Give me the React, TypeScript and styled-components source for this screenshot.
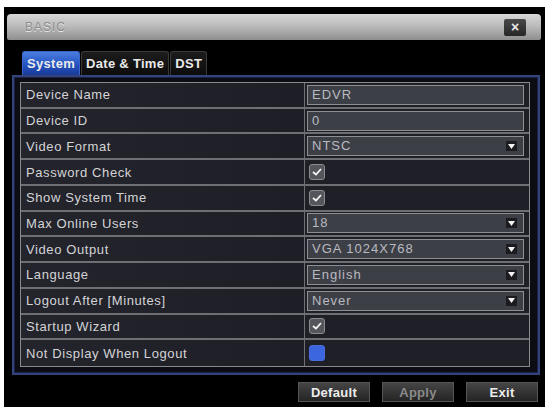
import React from 'react';
import styled, { createGlobalStyle } from 'styled-components';

const GlobalStyle = createGlobalStyle`
  body {
    margin: 0;
    background: #fff;
    font-family: "Liberation Sans", Arial, sans-serif;
  }
`;

type Field =
  | { label: string; kind: 'text'; value: string }
  | { label: string; kind: 'select'; value: string }
  | { label: string; kind: 'check'; checked: boolean };

const fields: Field[] = [
  { label: 'Device Name', kind: 'text', value: 'EDVR' },
  { label: 'Device ID', kind: 'text', value: '0' },
  { label: 'Video Format', kind: 'select', value: 'NTSC' },
  { label: 'Password Check', kind: 'check', checked: true },
  { label: 'Show System Time', kind: 'check', checked: true },
  { label: 'Max Online Users', kind: 'select', value: '18' },
  { label: 'Video Output', kind: 'select', value: 'VGA 1024X768' },
  { label: 'Language', kind: 'select', value: 'English' },
  { label: 'Logout After [Minutes]', kind: 'select', value: 'Never' },
  { label: 'Startup Wizard', kind: 'check', checked: true },
  { label: 'Not Display When Logout', kind: 'check', checked: false },
];

export default function App() {
  return (
    <>
      <GlobalStyle />
      <Window>
        <TitleBar>
          <Title>BASIC</Title>
          <CloseButton>×</CloseButton>
        </TitleBar>
        <TabRow>
          <Tab active>System</Tab>
          <Tab>Date &amp; Time</Tab>
          <Tab>DST</Tab>
        </TabRow>
        <Panel>
          <Table>
            {fields.map((f, i) => (
              <Row key={f.label} last={i === fields.length - 1}>
                <Label>{f.label}</Label>
                <ValueCell>
                  {f.kind === 'text' && <Input>{f.value}</Input>}
                  {f.kind === 'select' && (
                    <Input>
                      {f.value}
                      <Arrow>
                        <svg width="7" height="5" viewBox="0 0 7 5">
                          <path d="M0 0 L7 0 L3.5 5 Z" fill="#f2f2f2" />
                        </svg>
                      </Arrow>
                    </Input>
                  )}
                  {f.kind === 'check' && (
                    <Check checked={f.checked}>
                      {f.checked && (
                        <svg width="10" height="8" viewBox="0 0 10 8">
                          <path d="M1 4 L4 6.5 L9 1" stroke="#f4f4f4" strokeWidth="1.8" fill="none" />
                        </svg>
                      )}
                    </Check>
                  )}
                </ValueCell>
              </Row>
            ))}
          </Table>
        </Panel>
        <ButtonRow>
          <Button>Default</Button>
          <Button disabled>Apply</Button>
          <Button>Exit</Button>
        </ButtonRow>
      </Window>
    </>
  );
}

const Window = styled.div`
  margin: 7px 0 0 4px;
  width: 541px;
  height: 400px;
  box-sizing: border-box;
  padding: 7px 4px 0 3px;
  background: #000;
  display: flex;
  flex-direction: column;
`;

const TitleBar = styled.div`
  height: 26px;
  border-radius: 4px 4px 2px 2px;
  background: linear-gradient(180deg, #d6d6d6 0%, #bcbcbc 45%, #8e8e8e 100%);
  display: flex;
  align-items: center;
  justify-content: space-between;
  padding: 0 15px 0 18px;
`;

const Title = styled.span`
  font-size: 12px;
  letter-spacing: 1px;
  color: #8a8a8a;
  text-shadow: 0 1px 0 #e6e6e6;
`;

const CloseButton = styled.div`
  width: 22px;
  height: 17px;
  border-radius: 2px;
  background: linear-gradient(180deg, #4a4a4a, #262626);
  color: #e8e8e8;
  font-size: 14px;
  font-weight: bold;
  line-height: 17px;
  text-align: center;
`;

const TabRow = styled.div`
  display: flex;
  gap: 1px;
  margin-top: 11px;
  padding-left: 15px;
  height: 24px;
`;

const Tab = styled.div<{ active?: boolean }>`
  padding: 0 4px;
  font-size: 13px;
  font-weight: bold;
  line-height: 23px;
  color: #eaeaea;
  letter-spacing: 0.3px;
  border: 1px solid ${p => (p.active ? '#3a64c8' : '#3a3a3a')};
  border-bottom: none;
  border-radius: 3px 3px 0 0;
  background: ${p =>
    p.active
      ? 'linear-gradient(180deg, #4a7de0 0%, #2453c0 55%, #1a3a98 100%)'
      : 'linear-gradient(180deg, #1c1c1c, #0c0c0c)'};
`;

const Panel = styled.div`
  margin-left: 5px;
  width: 528px;
  height: 300px;
  box-sizing: border-box;
  border: 2px solid #33447c;
  box-shadow: inset 0 0 0 1px #1b2246;
  background: #0b0c14;
  padding: 5px 8px 0 6px;
`;

const Table = styled.div`
  display: grid;
  grid-template-rows: repeat(11, 1fr);
  height: 283px;
  border: 1px solid #8a8a8e;
  background: #1e1f27;
`;

const Row = styled.div<{ last?: boolean }>`
  display: grid;
  grid-template-columns: 283px 1fr;
  border-bottom: ${p => (p.last ? 'none' : '2px solid #6e6f74')};
`;

const Label = styled.div`
  display: flex;
  align-items: center;
  padding-left: 5px;
  font-size: 13px;
  letter-spacing: 0.6px;
  color: #d4d4d6;
  background: linear-gradient(90deg, #23242c, #1d1e26);
`;

const ValueCell = styled.div`
  display: flex;
  align-items: center;
  border-left: 1px solid #6e6f74;
  padding: 0 5px 0 2px;
`;

const Input = styled.div`
  position: relative;
  flex: 1;
  height: 20px;
  box-sizing: border-box;
  border: 1px solid #8e8f94;
  background: #3d3f47;
  color: #b9bac0;
  font-size: 13px;
  letter-spacing: 1px;
  line-height: 18px;
  padding-left: 4px;
`;

const Arrow = styled.span`
  position: absolute;
  right: 6px;
  top: 4px;
  width: 11px;
  height: 10px;
  background: #1c1c20;
  display: flex;
  align-items: center;
  justify-content: center;
`;

const Check = styled.div<{ checked: boolean }>`
  width: 16px;
  height: 16px;
  box-sizing: border-box;
  margin-left: 2px;
  border-radius: 3px;
  border: 1px solid ${p => (p.checked ? '#8a8a90' : '#4a6cd8')};
  background: ${p => (p.checked ? '#55565c' : '#3c66e0')};
  display: flex;
  align-items: center;
  justify-content: center;
`;

const ButtonRow = styled.div`
  display: flex;
  justify-content: flex-end;
  gap: 12px;
  margin-top: 7px;
  padding-right: 3px;
`;

const Button = styled.button`
  width: 72px;
  height: 20px;
  border: 1px solid #555;
  background: linear-gradient(180deg, #454545, #242424);
  color: #ececec;
  font-family: "Liberation Sans", Arial, sans-serif;
  font-size: 13px;
  font-weight: bold;
  letter-spacing: 0.3px;
  padding: 0;

  &:disabled {
    color: #8a8a8a;
  }
`;
